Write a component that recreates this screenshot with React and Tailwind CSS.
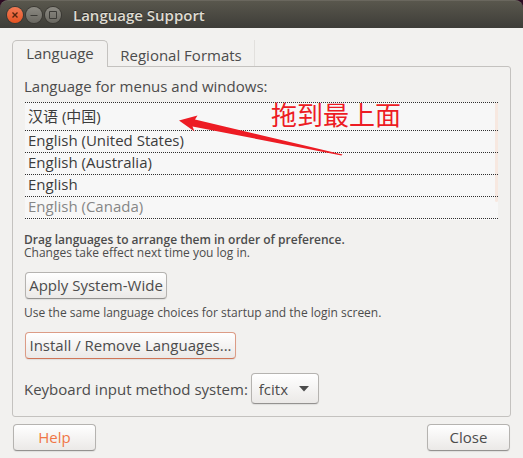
import { useState } from "react";

const buttonBase =
  "rounded border bg-gradient-to-b from-white to-[#ebe9e7] text-center text-[15px] leading-5 shadow-[0_1px_1px_rgba(0,0,0,0.08)]";
const grayBorder = "border-[#b5b3b0] border-b-[#949290]";

const languages = [
  { name: "English (United States)", lang: "en-US" },
  { name: "English (Australia)", lang: "en-AU" },
  { name: "English", lang: "en" },
];

function TitleBar() {
  return (
    <header className="bg-[#2c0b22]">
      <div className="flex h-7 items-center rounded-t-lg border-t border-[#6a675e] bg-gradient-to-b from-[#59574d] to-[#3e3d38] pl-[7px]">
        <div className="flex gap-[3px]">
          <button
            aria-label="Close window"
            className="size-4 rounded-full bg-gradient-to-b from-[#f27a54] to-[#e5521f] ring-1 ring-[#3a3833]"
          >
            <svg viewBox="0 0 16 16" className="size-4" fill="none" stroke="#55260f" strokeWidth="1.4">
              <path d="M5.5 5.5l5 5M10.5 5.5l-5 5" />
            </svg>
          </button>
          <button
            aria-label="Minimize"
            className="size-4 rounded-full bg-gradient-to-b from-[#8c8a83] to-[#6a6861] ring-1 ring-[#3a3833]"
          >
            <svg viewBox="0 0 16 16" className="size-4" fill="none" stroke="#3c3b37">
              <path d="M4.5 8.5h7" />
            </svg>
          </button>
          <button
            aria-label="Maximize"
            className="size-4 rounded-full bg-gradient-to-b from-[#8c8a83] to-[#6a6861] ring-1 ring-[#3a3833]"
          >
            <svg viewBox="0 0 16 16" className="size-4" fill="none" stroke="#3c3b37">
              <path d="M4.500 4.500h7v7h-7z" />
            </svg>
          </button>
        </div>
        <h1 className="ml-3 text-[15px] leading-5 font-semibold text-[#dfdbd2] [text-shadow:0_-1px_0_#2b2a26]">
          Language Support
        </h1>
      </div>
    </header>
  );
}

function LanguageList() {
  return (
    <div className="relative mx-px mt-[6px] bg-[#f7f7f7] pb-px text-[#3c3c3c]">
      <div className="absolute top-px right-0 h-[99px] w-[3px] rounded-b bg-[#f7e8e0]" />
      <ul className="relative border-t border-dotted border-[#303030] text-[15px]">
        <li className="h-7 border-b border-dotted border-[#303030] pl-[3px] leading-[27px]" lang="zh-CN">
          汉语 (中国)
        </li>
        {languages.map((item) => (
          <li
            key={item.name}
            lang={item.lang}
            className="h-[22px] border-b border-dotted border-[#303030] pl-[3px] leading-[19px]"
          >
            {item.name}
          </li>
        ))}
        <li className="h-[22px] border-b border-dotted border-[#303030] pl-[3px] leading-[19px]">
          <span className="text-[#868686]">English (Canada)</span>
        </li>
      </ul>
      <svg
        className="absolute top-3 left-[152px]"
        width="168"
        height="44"
        viewBox="177 114 168 44"
        fill="#ed1c24"
        aria-hidden="true"
      >
        <path d="M179 120.500L197.500 115.500L195 119.500L342.500 154.500L341.500 155.500L192.500 126.500L194.500 131.500Z" />
      </svg>
      <p
        lang="zh-CN"
        className="absolute top-0 left-[246px] text-[26px] leading-[26px] whitespace-nowrap text-[#ed1c24]"
      >
        拖到最上面
      </p>
    </div>
  );
}

export default function App() {
  const [method, setMethod] = useState("fcitx");
  return (
    <div className="flex min-h-screen flex-col bg-[#f2f1ef] font-['Open_Sans','Noto_Sans_CJK_SC',sans-serif] text-[#4c4c4c]">
      <TitleBar />
      <main className="flex flex-col px-3 pt-3">
        <div role="tablist" className="flex h-[27px] text-[15px] leading-5">
          <button
            role="tab"
            aria-selected="true"
            className="relative -mb-px h-[27px] w-24 rounded-t-[5px] border border-b-0 border-[#c4c2bf] bg-[#f2f1ef] pb-[2px]"
          >
            Language
          </button>
          <button
            role="tab"
            aria-selected="false"
            className="w-[147px] border-r border-[#e2e0dd] pt-[2px]"
          >
            Regional Formats
          </button>
        </div>
        <section className="-mt-px flex flex-col rounded-tr-[3px] rounded-b-[3px] border border-[#c4c2bf] px-[11px] pt-[9px] pb-3">
          <h2 className="text-[15px] leading-5">Language for menus and windows:</h2>
          <LanguageList />
          <p className="mt-[13px] text-[12px] leading-[13px]">
            <strong className="font-semibold">Drag languages to arrange them in order of preference.</strong>
            <br />
            Changes take effect next time you log in.
          </p>
          <button className={`${buttonBase} ${grayBorder} mt-[13px] ml-px h-[27px] w-[142px] self-start pb-px`}>
            Apply System-Wide
          </button>
          <p className="mt-[7px] text-[12px] leading-[13px]">
            Use the same language choices for startup and the login screen.
          </p>
          <button
            className={`${buttonBase} mt-[13px] ml-px h-[27px] w-[211px] self-start border-[#dc9c86] border-b-[#cf7557] pb-px`}
          >
            Install / Remove Languages...
          </button>
          <div className="mt-[14px] flex items-center gap-[3px]">
            <label htmlFor="method" className="text-[15px] leading-5">
              Keyboard input method system:
            </label>
            <div className="relative">
              <select
                id="method"
                value={method}
                onChange={(e) => setMethod(e.target.value)}
                className={`${buttonBase} ${grayBorder} h-[31px] w-[68px] appearance-none pr-6 pl-[7px] text-left`}
              >
                <option>fcitx</option>
              </select>
              <svg
                className="pointer-events-none absolute top-[13px] right-[10px]"
                width="10"
                height="6"
                viewBox="0 0 10 6"
                fill="#4c4c4c"
                aria-hidden="true"
              >
                <path d="M0 0h10L5 5.500z" />
              </svg>
            </div>
          </div>
        </section>
        <footer className="mt-[7px] flex justify-between px-px">
          <button className={`${buttonBase} ${grayBorder} h-[27px] w-[83px] pb-px text-[#f07746]`}>Help</button>
          <button className={`${buttonBase} ${grayBorder} h-[27px] w-[83px] pb-px`}>Close</button>
        </footer>
      </main>
    </div>
  );
}
